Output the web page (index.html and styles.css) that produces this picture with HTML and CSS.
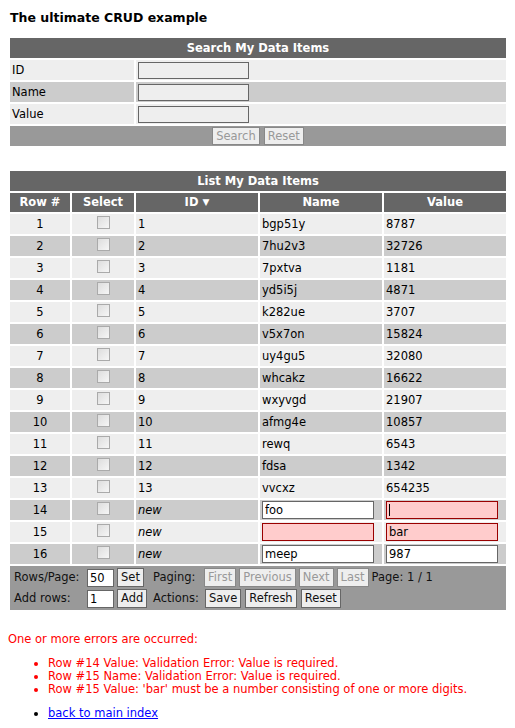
FILE: index.html
```html
<!DOCTYPE html>
<html>
<head>
<meta charset="utf-8">
<title>The ultimate CRUD example</title>
<link rel="stylesheet" href="styles.css">
</head>
<body>
<h1 class="title">The ultimate CRUD example</h1>

<table class="grid search">
  <colgroup><col class="c-label"><col></colgroup>
  <tr class="head"><th colspan="2">Search My Data Items</th></tr>
  <tr class="odd"><td class="label">ID</td><td class="field"><input class="sinput" type="text"></td></tr>
  <tr class="even"><td class="label">Name</td><td class="field"><input class="sinput" type="text"></td></tr>
  <tr class="odd"><td class="label">Value</td><td class="field"><input class="sinput" type="text"></td></tr>
  <tr class="actions"><td colspan="2" class="center"><button class="btn" disabled>Search</button><button class="btn" disabled>Reset</button></td></tr>
</table>

<table class="grid list">
  <colgroup><col class="c-row"><col class="c-sel"><col class="c-id"><col class="c-name"><col></colgroup>
  <tr class="head"><th colspan="5">List My Data Items</th></tr>
  <tr class="colhead"><th>Row #</th><th>Select</th><th>ID <span class="arrow">▼</span></th><th>Name</th><th>Value</th></tr>
  <tr class="odd"><td class="num">1</td><td class="sel"><span class="cb"></span></td><td>1</td><td>bgp51y</td><td>8787</td></tr>
  <tr class="even"><td class="num">2</td><td class="sel"><span class="cb"></span></td><td>2</td><td>7hu2v3</td><td>32726</td></tr>
  <tr class="odd"><td class="num">3</td><td class="sel"><span class="cb"></span></td><td>3</td><td>7pxtva</td><td>1181</td></tr>
  <tr class="even"><td class="num">4</td><td class="sel"><span class="cb"></span></td><td>4</td><td>yd5i5j</td><td>4871</td></tr>
  <tr class="odd"><td class="num">5</td><td class="sel"><span class="cb"></span></td><td>5</td><td>k282ue</td><td>3707</td></tr>
  <tr class="even"><td class="num">6</td><td class="sel"><span class="cb"></span></td><td>6</td><td>v5x7on</td><td>15824</td></tr>
  <tr class="odd"><td class="num">7</td><td class="sel"><span class="cb"></span></td><td>7</td><td>uy4gu5</td><td>32080</td></tr>
  <tr class="even"><td class="num">8</td><td class="sel"><span class="cb"></span></td><td>8</td><td>whcakz</td><td>16622</td></tr>
  <tr class="odd"><td class="num">9</td><td class="sel"><span class="cb"></span></td><td>9</td><td>wxyvgd</td><td>21907</td></tr>
  <tr class="even"><td class="num">10</td><td class="sel"><span class="cb"></span></td><td>10</td><td>afmg4e</td><td>10857</td></tr>
  <tr class="odd"><td class="num">11</td><td class="sel"><span class="cb"></span></td><td>11</td><td>rewq</td><td>6543</td></tr>
  <tr class="even"><td class="num">12</td><td class="sel"><span class="cb"></span></td><td>12</td><td>fdsa</td><td>1342</td></tr>
  <tr class="odd"><td class="num">13</td><td class="sel"><span class="cb"></span></td><td>13</td><td>vvcxz</td><td>654235</td></tr>
  <tr class="even"><td class="num">14</td><td class="sel"><span class="cb"></span></td><td class="new">new</td><td><input class="rinput" type="text" value="foo"></td><td><span class="focus"><input class="rinput error" type="text" value=""></span></td></tr>
  <tr class="odd"><td class="num">15</td><td class="sel"><span class="cb"></span></td><td class="new">new</td><td><input class="rinput error" type="text" value=""></td><td><input class="rinput error" type="text" value="bar"></td></tr>
  <tr class="even"><td class="num">16</td><td class="sel"><span class="cb"></span></td><td class="new">new</td><td><input class="rinput" type="text" value="meep"></td><td><input class="rinput" type="text" value="987"></td></tr>
  <tr class="footer"><td colspan="5">
    <div class="pager">
      <span class="plabel">Rows/Page:</span>
      <span class="pgroup"><input class="small" type="text" value="50"><button class="btn on">Set</button></span>
      <span class="plabel2">Paging:</span>
      <span class="pgroup"><button class="btn" disabled>First</button><button class="btn" disabled>Previous</button><button class="btn" disabled>Next</button><button class="btn" disabled>Last</button><span class="pageinfo">Page: 1 / 1</span></span>
      <span class="plabel">Add rows:</span>
      <span class="pgroup"><input class="small" type="text" value="1"><button class="btn on">Add</button></span>
      <span class="plabel2">Actions:</span>
      <span class="pgroup wide"><button class="btn on">Save</button><button class="btn on">Refresh</button><button class="btn on">Reset</button></span>
    </div>
  </td></tr>
</table>

<p class="errhead">One or more errors are occurred:</p>
<ul class="errors">
  <li>Row #14 Value: Validation Error: Value is required.</li>
  <li>Row #15 Name: Validation Error: Value is required.</li>
  <li>Row #15 Value: 'bar' must be a number consisting of one or more digits.</li>
</ul>
<ul class="links">
  <li><a href="#">back to main index</a></li>
</ul>
</body>
</html>
```

FILE: styles.css
```css
body {
  margin: 8px;
  font-family: "DejaVu Sans", Verdana, sans-serif;
  font-size: 11.5px;
  line-height: 13px;
  color: #000;
  background: #fff;
}

.title {
  font-size: 12.5px;
  line-height: 16px;
  font-weight: bold;
  margin: 2px 0 10px 2px;
}

.grid {
  width: 500px;
  border-collapse: separate;
  border-spacing: 2px;
  table-layout: fixed;
}

.grid td, .grid th {
  padding: 0 2px;
  height: 20px;
  vertical-align: middle;
}

.c-label { width: 124px; }
.c-row { width: 60px; }
.c-sel { width: 62px; }
.c-id { width: 122px; }
.c-name { width: 122px; }

.head th {
  background: #666;
  color: #fff;
  font-weight: bold;
  text-align: center;
}

.colhead th {
  background: #666;
  color: #fff;
  font-weight: bold;
  text-align: center;
  height: 19px;
}

.arrow {
  font-size: 9px;
  position: relative;
  top: -1px;
}

.odd td { background: #eee; }
.even td { background: #ccc; }

.label { padding-left: 1px; }
.field { padding-left: 2px; }

.sinput {
  box-sizing: border-box;
  width: 111px;
  height: 17px;
  margin: 0;
  border: 1px solid #666;
  background: #eee;
  display: block;
}

.actions td { background: #999; }
.center { text-align: center; }
.center .btn { height: 18px; margin: 0 2px; }

.btn {
  box-sizing: border-box;
  height: 19px;
  margin: 0;
  padding: 0 3px;
  font-family: "DejaVu Sans", Verdana, sans-serif;
  font-size: 11.5px;
  line-height: 15px;
  background: #eee;
  border: 1px solid #888;
  color: #999;
  border-radius: 0;
}
.btn.on {
  color: #111;
  border-color: #666;
}

.search { margin-bottom: 21px; }

.num, .sel { text-align: center; }

.cb {
  display: inline-block;
  width: 11px;
  height: 11px;
  border: 1px solid #aaa;
  background: linear-gradient(135deg, #ddd, #f6f6f6);
  vertical-align: middle;
  margin-top: -3px;
}

.new { font-style: italic; }

.rinput {
  box-sizing: border-box;
  display: block;
  width: 112px;
  height: 18px;
  margin: 0;
  padding: 0 2px;
  border: 1px solid #666;
  background: #fff;
  font-family: "DejaVu Sans", Verdana, sans-serif;
  font-size: 11.5px;
  color: #000;
}
.rinput.error {
  background: #fcc;
  border-color: #900;
}

.focus {
  display: block;
  position: relative;
}
.focus::after {
  content: "";
  position: absolute;
  left: 3px;
  top: 3px;
  width: 1px;
  height: 12px;
  background: #000;
}

.footer td {
  background: #999;
  padding: 2px 4px;
  height: auto;
}

.pager {
  display: grid;
  grid-template-columns: 73px 66px 51px auto;
  row-gap: 2px;
  align-items: center;
  color: #111;
}

.pgroup {
  display: flex;
  align-items: center;
  gap: 3px;
}
.pgroup.wide { gap: 4px; padding-left: 1px; }

.small {
  box-sizing: border-box;
  width: 27px;
  height: 18px;
  margin: 0;
  padding: 0 2px;
  border: 1px solid #666;
  background: #fff;
  font-family: "DejaVu Sans", Verdana, sans-serif;
  font-size: 11.5px;
  color: #000;
}

.errhead {
  color: #f00;
  margin: 21px 0 11px 0;
}

.errors, .links {
  margin: 11px 0;
  padding-left: 40px;
}
.errors li { color: #f00; }
.links li { color: #000; }
.links a { color: #00f; text-decoration: underline; }
```
